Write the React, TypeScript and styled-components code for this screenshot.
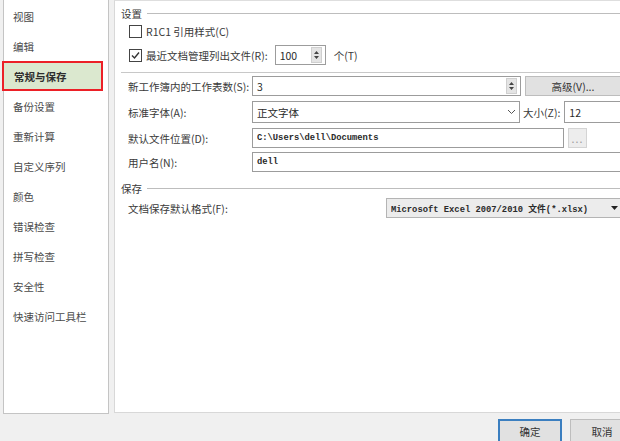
import React from 'react';
import styled, { createGlobalStyle } from 'styled-components';

const GlobalStyle = createGlobalStyle`
  body {
    margin: 0;
    background: #f0f0f0;
    font-family: "Noto Sans CJK SC", "Liberation Sans", sans-serif;
    font-size: 10.5px;
    color: #3a3a3a;
  }
`;

const Window = styled.div`
  width: 620px;
  height: 441px;
  display: flex;
  flex-direction: column;
  overflow: hidden;
  background: #f0f0f0;
`;

const Main = styled.div`
  display: flex;
  height: 414px;
  padding-left: 3px;
  gap: 5px;
`;

const Sidebar = styled.div`
  width: 106px;
  height: 414px;
  background: #fff;
  border: 1px solid #c4c4c4;
  border-top: none;
  box-sizing: border-box;
  display: flex;
  flex-direction: column;
  padding-top: 1px;
`;

const NavItem = styled.div<{ $active?: boolean }>`
  height: 30px;
  display: flex;
  align-items: center;
  box-sizing: border-box;
  padding-left: ${({ $active }) => ($active ? '10px' : '9px')};
  margin: ${({ $active }) => ($active ? '0 5px 0 -2px' : '0')};
  border: ${({ $active }) => ($active ? '2px solid #ec2027' : 'none')};
  background: ${({ $active }) => ($active ? '#dbe8cf' : 'transparent')};
  font-weight: ${({ $active }) => ($active ? 600 : 400)};
  color: ${({ $active }) => ($active ? '#2e2e2e' : '#4a4a4a')};
  white-space: nowrap;
`;

const Panel = styled.div`
  flex: 1;
  height: 413px;
  background: #fff;
  border-left: 1px solid #d8d8d8;
  border-top: 1px solid #dedede;
  border-bottom: 1px solid #d8d8d8;
  box-sizing: border-box;
  padding: 4px 0 0 6px;
  display: flex;
  flex-direction: column;
  overflow: hidden;
`;

const GroupTitle = styled.div<{ $top: number }>`
  display: flex;
  align-items: center;
  height: 16px;
  margin-top: ${({ $top }) => $top}px;
  white-space: nowrap;

  &::after {
    content: '';
    flex: 1;
    height: 1px;
    background: #bdbdbd;
    margin-left: 5px;
  }
`;

const Divider = styled.div<{ $top: number }>`
  height: 1px;
  background: #c8c8c8;
  margin-top: ${({ $top }) => $top}px;
`;

const Row = styled.div<{ $top: number; $h?: number }>`
  display: flex;
  align-items: center;
  height: ${({ $h }) => $h ?? 20}px;
  margin-top: ${({ $top }) => $top}px;
  padding-left: 7px;
  white-space: nowrap;
`;

const CheckRow = styled(Row)`
  padding-left: 8px;
  gap: 4px;
`;

const CheckBox = styled.span`
  width: 11px;
  height: 11px;
  border: 1px solid #444;
  display: inline-flex;
  align-items: center;
  justify-content: center;
  background: #fff;
  flex-shrink: 0;
`;

const Label = styled.span<{ $w?: number }>`
  width: ${({ $w }) => ($w ? `${$w}px` : 'auto')};
  flex-shrink: 0;
`;

const Field = styled.div<{ $w: number; $mono?: boolean; $grey?: boolean }>`
  width: ${({ $w }) => $w}px;
  height: 20px;
  flex-shrink: 0;
  box-sizing: border-box;
  border: 1px solid ${({ $grey }) => ($grey ? '#b4b4b4' : '#9c9c9c')};
  background: ${({ $grey }) => ($grey ? '#ececec' : '#fff')};
  display: flex;
  align-items: center;
  padding: 0 3px 0 4px;
  font-family: ${({ $mono }) =>
    $mono ? '"Liberation Mono", "Noto Sans CJK SC", monospace' : 'inherit'};
  font-size: ${({ $mono }) => ($mono ? '8.8px' : '10.5px')};
  font-weight: ${({ $mono }) => ($mono ? 600 : 400)};
  color: #2a2a2a;
`;

const FieldText = styled.span`
  flex: 1;
  overflow: hidden;
`;

const Spin = styled.span`
  width: 9px;
  height: 14px;
  background: #e4e4e4;
  border: 1px solid #cfcfcf;
  display: flex;
  align-items: center;
  justify-content: center;
`;

const Button = styled.div<{ $w: number; $h?: number; $primary?: boolean; $faint?: boolean }>`
  width: ${({ $w }) => $w}px;
  height: ${({ $h }) => $h ?? 20}px;
  flex-shrink: 0;
  box-sizing: border-box;
  background: ${({ $faint }) => ($faint ? '#ededed' : '#e1e1e1')};
  border: ${({ $primary, $faint }) =>
    $primary ? '2px solid #3b7fc0' : $faint ? '1px solid #d4d4d4' : '1px solid #bdbdbd'};
  display: flex;
  align-items: center;
  justify-content: center;
  color: ${({ $faint }) => ($faint ? '#9a9a9a' : '#333')};
  letter-spacing: ${({ $faint }) => ($faint ? '1px' : '0')};
`;

const Footer = styled.div`
  flex: 1;
  display: flex;
  justify-content: flex-end;
  align-items: flex-start;
  padding-top: 5px;
  gap: 8px;
  margin-right: -14px;
`;

const Chevron = () => (
  <svg width="9" height="6" viewBox="0 0 9 6">
    <path d="M1 1 L4.5 4.5 L8 1" fill="none" stroke="#555" strokeWidth="1" />
  </svg>
);

const Arrows = () => (
  <Spin>
    <svg width="5" height="10" viewBox="0 0 5 10">
      <path d="M0 4 L2.5 1 L5 4 Z M0 6 L2.5 9 L5 6 Z" fill="#444" />
    </svg>
  </Spin>
);

const Check = () => (
  <svg width="9" height="9" viewBox="0 0 9 9">
    <path d="M1 4.5 L3.5 7 L8 1.5" fill="none" stroke="#333" strokeWidth="1.4" />
  </svg>
);

const navItems = [
  '视图',
  '编辑',
  '常规与保存',
  '备份设置',
  '重新计算',
  '自定义序列',
  '颜色',
  '错误检查',
  '拼写检查',
  '安全性',
  '快速访问工具栏',
];

const App: React.FC = () => {
  return (
    <Window>
      <GlobalStyle />
      <Main>
        <Sidebar>
          {navItems.map(item => (
            <NavItem key={item} $active={item === '常规与保存'}>
              {item}
            </NavItem>
          ))}
        </Sidebar>

        <Panel>
          <GroupTitle $top={0}>设置</GroupTitle>
          <CheckRow $top={1} $h={18}>
            <CheckBox />
            <span>R1C1 引用样式(C)</span>
          </CheckRow>
          <CheckRow $top={5} $h={20}>
            <CheckBox>
              <Check />
            </CheckBox>
            <span>最近文档管理列出文件(R):</span>
            <Field $w={51} style={{ marginLeft: 3 }}>
              <FieldText>100</FieldText>
              <Arrows />
            </Field>
            <span style={{ marginLeft: 4 }}>个(T)</span>
          </CheckRow>
          <Divider $top={7} />

          <Row $top={3}>
            <Label $w={124}>新工作簿内的工作表数(S):</Label>
            <Field $w={269}>
              <FieldText>3</FieldText>
              <Arrows />
            </Field>
            <Button $w={96} style={{ marginLeft: 4 }}>高级(V)...</Button>
          </Row>
          <Row $top={5} $h={22}>
            <Label $w={124}>标准字体(A):</Label>
            <Field $w={268} style={{ height: 22 }}>
              <FieldText>正文字体</FieldText>
              <Chevron />
            </Field>
            <Label style={{ marginLeft: 3 }}>大小(Z):</Label>
            <Field $w={70} style={{ height: 22, marginLeft: 4 }}>
              <FieldText>12</FieldText>
              <Chevron />
            </Field>
          </Row>
          <Row $top={5}>
            <Label $w={124}>默认文件位置(D):</Label>
            <Field $w={312} $mono>
              <FieldText>C:\Users\dell\Documents</FieldText>
            </Field>
            <Button $w={19} $faint style={{ marginLeft: 4 }}>...</Button>
          </Row>
          <Row $top={4}>
            <Label $w={124}>用户名(N):</Label>
            <Field $w={380} $mono>
              <FieldText>dell</FieldText>
            </Field>
          </Row>

          <GroupTitle $top={8}>保存</GroupTitle>
          <Row $top={2}>
            <Label $w={258}>文档保存默认格式(F):</Label>
            <Field $w={236} $mono $grey>
              <FieldText>Microsoft Excel 2007/2010 文件(*.xlsx)</FieldText>
              <svg width="7" height="5" viewBox="0 0 7 5">
                <path d="M0 0 L7 0 L3.5 4 Z" fill="#222" />
              </svg>
            </Field>
          </Row>
        </Panel>
      </Main>

      <Footer>
        <Button $w={64} $h={24} $primary>确定</Button>
        <Button $w={64} $h={24}>取消</Button>
      </Footer>
    </Window>
  );
};

export default App;
